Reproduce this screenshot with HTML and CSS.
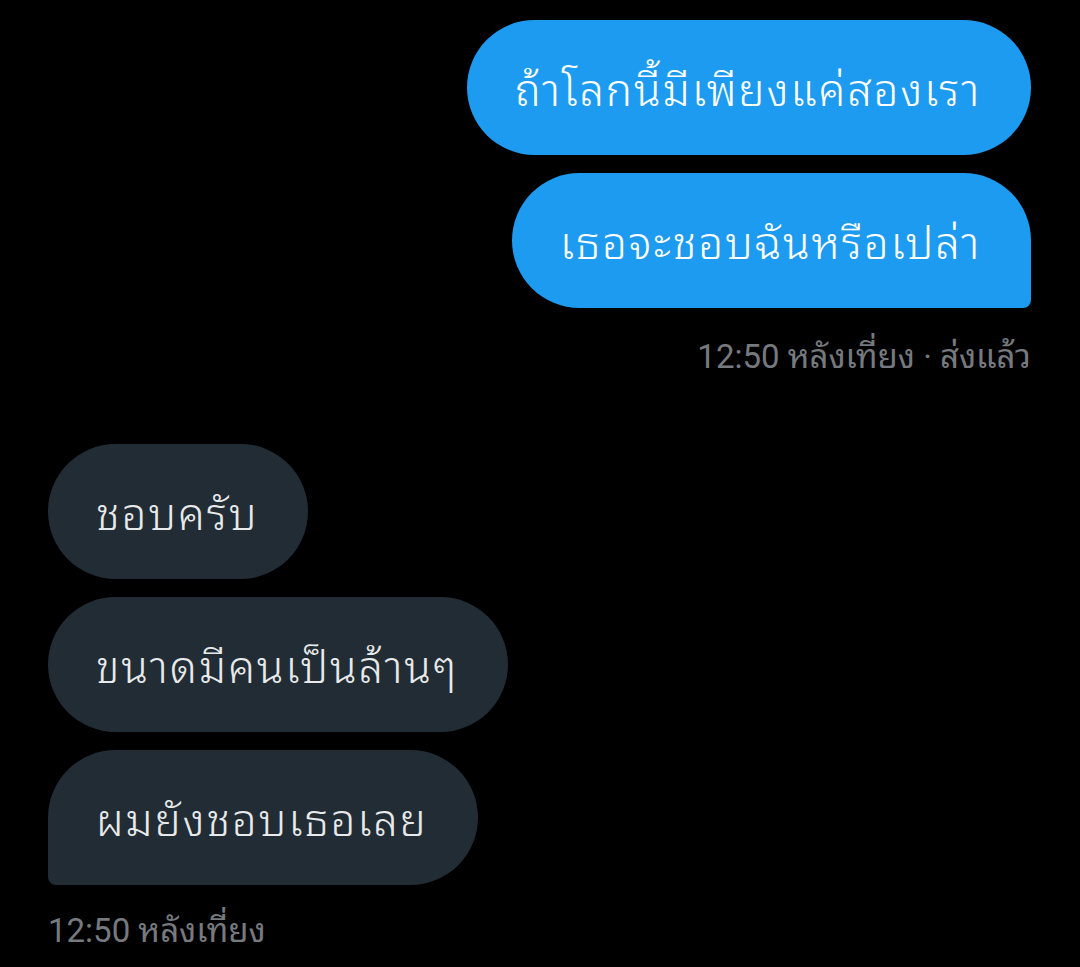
FILE: index.html
```html
<!DOCTYPE html>
<html lang="th">
<head>
<meta charset="utf-8">
<link rel="stylesheet" href="styles.css">
</head>
<body>
<div class="chat">
  <div class="group sent">
    <div class="bubble blue">ถ้าโลกนี้มีเพียงแค่สองเรา</div>
    <div class="bubble blue last">เธอจะชอบฉันหรือเปล่า</div>
    <div class="meta">12:50 หลังเที่ยง · ส่งแล้ว</div>
  </div>
  <div class="group received">
    <div class="bubble dark">ชอบครับ</div>
    <div class="bubble dark">ขนาดมีคนเป็นล้านๆ</div>
    <div class="bubble dark last">ผมยังชอบเธอเลย</div>
    <div class="meta">12:50 หลังเที่ยง</div>
  </div>
</div>
</body>
</html>
```
FILE: styles.css
```css
html, body {
  margin: 0;
  padding: 0;
  background: #000;
}
body {
  width: 1080px;
  height: 967px;
  overflow: hidden;
  font-family: Roboto, "Noto Sans Thai Looped", "Noto Sans Thai", sans-serif;
}
.chat {
  display: flex;
  flex-direction: column;
  padding: 20px 49px 0 48px;
  gap: 64px;
}
.group {
  display: flex;
  flex-direction: column;
  gap: 18px;
}
.sent { align-items: flex-end; }
.received { align-items: flex-start; }
.bubble {
  height: 135px;
  box-sizing: border-box;
  display: flex;
  align-items: center;
  padding: 0 50px 4px 48px;
  border-radius: 68px;
  font-size: 44px;
  font-weight: 300;
  letter-spacing: 1.8px;
  color: #fff;
  white-space: nowrap;
}
.blue { background: #1d9bf0; }
.dark { background: #222c34; color: #e7e9ea; }
.sent .last { border-bottom-right-radius: 8px; }
.received .last { border-bottom-left-radius: 8px; }
.meta {
  color: #767a7f;
  font-size: 33px;
  margin-top: 1px;
}
.received .meta { margin-top: -2px; }
```
